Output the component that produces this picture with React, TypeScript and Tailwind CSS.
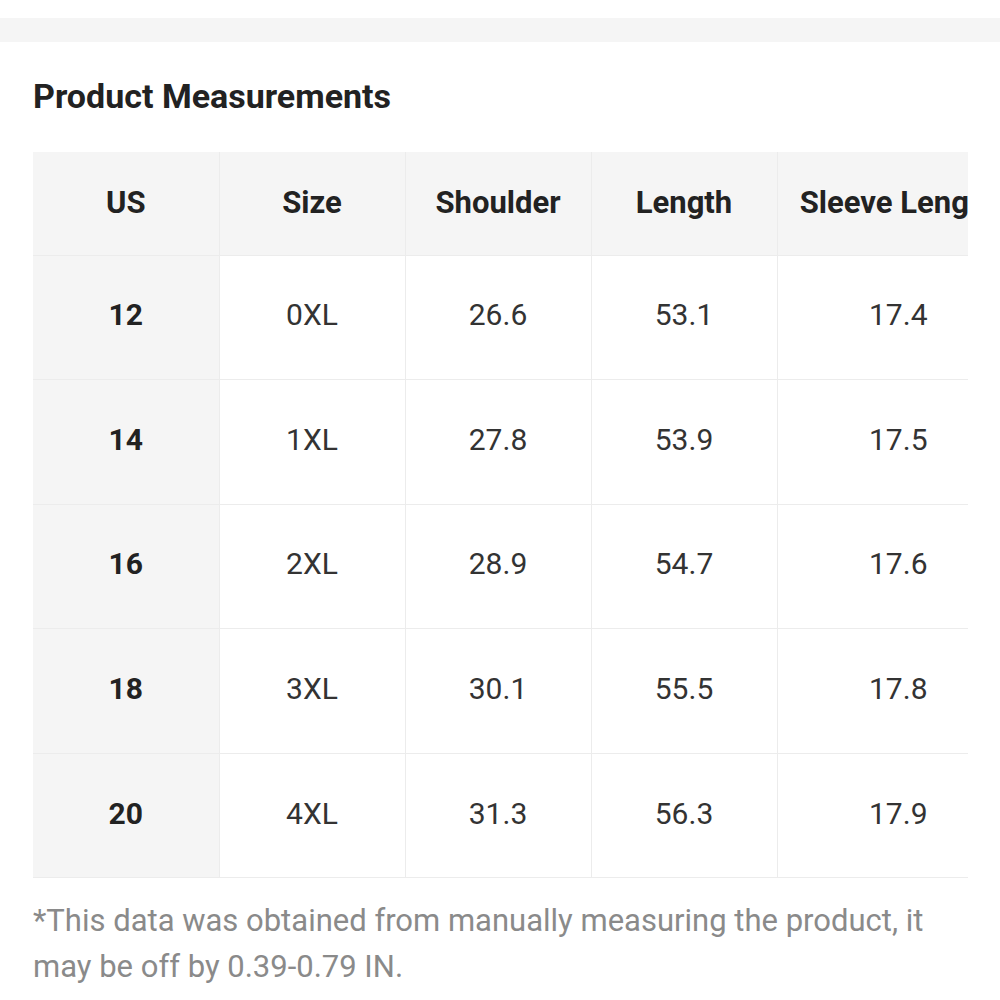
import React from "react";

const rows = [
  ["12", "0XL", "26.6", "53.1", "17.4"],
  ["14", "1XL", "27.8", "53.9", "17.5"],
  ["16", "2XL", "28.9", "54.7", "17.6"],
  ["18", "3XL", "30.1", "55.5", "17.8"],
  ["20", "4XL", "31.3", "56.3", "17.9"],
];

const headers = ["US", "Size", "Shoulder", "Length", "Sleeve Length"];
const widths = ["w-[186px]", "w-[186px]", "w-[186px]", "w-[186px]", "w-[242px]"];

export default function App() {
  return (
    <div className="w-[1000px] h-[1000px] bg-white overflow-hidden" style={{ fontFamily: "Roboto, 'Noto Sans', sans-serif" }}>
      <div className="h-[18px] bg-white" />
      <div className="h-[24px] bg-[#f5f5f5]" />
      <div className="pl-[33px] pt-[34px]">
        <h1 className="text-[34px] leading-[40px] font-bold text-[#222]">Product Measurements</h1>
        <div className="mt-[36px] w-[935px] overflow-hidden">
          <table className="border-collapse table-fixed w-[986px]">
            <thead>
              <tr className="h-[103px] bg-[#f5f5f5]">
                {headers.map((h, i) => (
                  <th
                    key={h}
                    className={`${widths[i]} p-0 text-[31px] font-bold text-[#222] text-center whitespace-nowrap border-l border-[#ececec] first:border-l-0 border-b`}
                  >
                    {h}
                  </th>
                ))}
              </tr>
            </thead>
            <tbody>
              {rows.map((r) => (
                <tr key={r[0]} className="h-[124.6px]">
                  {r.map((c, i) => (
                    <td
                      key={i}
                      className={
                        i === 0
                          ? "p-0 pb-[5px] bg-[#f5f5f5] text-center text-[30px] font-bold text-[#222] border-b border-[#ececec]"
                          : "p-0 pb-[5px] text-center text-[30px] text-[#333] border-l border-b border-[#ececec]"
                      }
                    >
                      {c}
                    </td>
                  ))}
                </tr>
              ))}
            </tbody>
          </table>
        </div>
        <p className="mt-[20px] w-[940px] text-[31px] leading-[46px] text-[#8a8a8a]">
          *This data was obtained from manually measuring the product, it may be off by 0.39-0.79 IN.
        </p>
      </div>
    </div>
  );
}
